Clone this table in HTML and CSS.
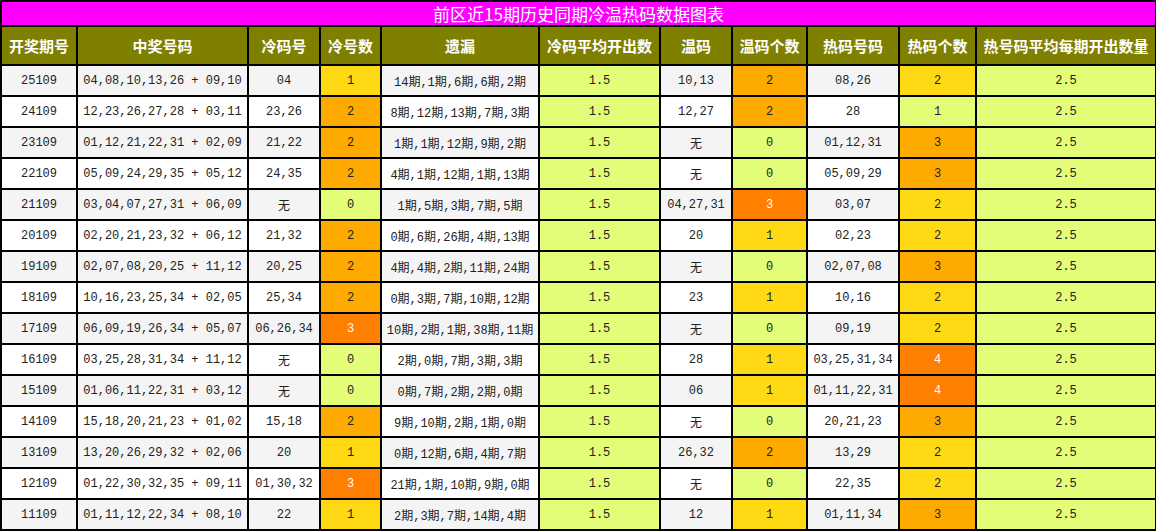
FILE: index.html
```html
<!DOCTYPE html>
<html lang="zh-CN">
<head>
<meta charset="utf-8">
<title>前区近15期历史同期冷温热码数据图表</title>
<link rel="stylesheet" href="styles.css">
</head>
<body>
<table class="chart">
  <colgroup>
    <col class="c1"><col class="c2"><col class="c3"><col class="c4"><col class="c5"><col class="c6"><col class="c7"><col class="c8"><col class="c9"><col class="c10"><col class="c11">
  </colgroup>
  <thead>
    <tr class="title-row"><th colspan="11">前区近15期历史同期冷温热码数据图表</th></tr>
    <tr class="head-row">
      <th>开奖期号</th><th>中奖号码</th><th>冷码号</th><th>冷号数</th><th>遗漏</th><th>冷码平均开出数</th><th>温码</th><th>温码个数</th><th>热码号码</th><th>热码个数</th><th>热号码平均每期开出数量</th>
    </tr>
  </thead>
  <tbody>
    <tr><td>25109</td><td>04,08,10,13,26 + 09,10</td><td>04</td><td class="l1">1</td><td>14期,1期,6期,6期,2期</td><td class="l0">1.5</td><td>10,13</td><td class="l2">2</td><td>08,26</td><td class="l1">2</td><td class="l0">2.5</td></tr>
    <tr><td>24109</td><td>12,23,26,27,28 + 03,11</td><td>23,26</td><td class="l2">2</td><td>8期,12期,13期,7期,3期</td><td class="l0">1.5</td><td>12,27</td><td class="l2">2</td><td>28</td><td class="l0">1</td><td class="l0">2.5</td></tr>
    <tr><td>23109</td><td>01,12,21,22,31 + 02,09</td><td>21,22</td><td class="l2">2</td><td>1期,1期,12期,9期,2期</td><td class="l0">1.5</td><td>无</td><td class="l0">0</td><td>01,12,31</td><td class="l2">3</td><td class="l0">2.5</td></tr>
    <tr><td>22109</td><td>05,09,24,29,35 + 05,12</td><td>24,35</td><td class="l2">2</td><td>4期,1期,12期,1期,13期</td><td class="l0">1.5</td><td>无</td><td class="l0">0</td><td>05,09,29</td><td class="l2">3</td><td class="l0">2.5</td></tr>
    <tr><td>21109</td><td>03,04,07,27,31 + 06,09</td><td>无</td><td class="l0">0</td><td>1期,5期,3期,7期,5期</td><td class="l0">1.5</td><td>04,27,31</td><td class="l3">3</td><td>03,07</td><td class="l1">2</td><td class="l0">2.5</td></tr>
    <tr><td>20109</td><td>02,20,21,23,32 + 06,12</td><td>21,32</td><td class="l2">2</td><td>0期,6期,26期,4期,13期</td><td class="l0">1.5</td><td>20</td><td class="l1">1</td><td>02,23</td><td class="l1">2</td><td class="l0">2.5</td></tr>
    <tr><td>19109</td><td>02,07,08,20,25 + 11,12</td><td>20,25</td><td class="l2">2</td><td>4期,4期,2期,11期,24期</td><td class="l0">1.5</td><td>无</td><td class="l0">0</td><td>02,07,08</td><td class="l2">3</td><td class="l0">2.5</td></tr>
    <tr><td>18109</td><td>10,16,23,25,34 + 02,05</td><td>25,34</td><td class="l2">2</td><td>0期,3期,7期,10期,12期</td><td class="l0">1.5</td><td>23</td><td class="l1">1</td><td>10,16</td><td class="l1">2</td><td class="l0">2.5</td></tr>
    <tr><td>17109</td><td>06,09,19,26,34 + 05,07</td><td>06,26,34</td><td class="l3">3</td><td>10期,2期,1期,38期,11期</td><td class="l0">1.5</td><td>无</td><td class="l0">0</td><td>09,19</td><td class="l1">2</td><td class="l0">2.5</td></tr>
    <tr><td>16109</td><td>03,25,28,31,34 + 11,12</td><td>无</td><td class="l0">0</td><td>2期,0期,7期,3期,3期</td><td class="l0">1.5</td><td>28</td><td class="l1">1</td><td>03,25,31,34</td><td class="l3">4</td><td class="l0">2.5</td></tr>
    <tr><td>15109</td><td>01,06,11,22,31 + 03,12</td><td>无</td><td class="l0">0</td><td>0期,7期,2期,2期,0期</td><td class="l0">1.5</td><td>06</td><td class="l1">1</td><td>01,11,22,31</td><td class="l3">4</td><td class="l0">2.5</td></tr>
    <tr><td>14109</td><td>15,18,20,21,23 + 01,02</td><td>15,18</td><td class="l2">2</td><td>9期,10期,2期,1期,0期</td><td class="l0">1.5</td><td>无</td><td class="l0">0</td><td>20,21,23</td><td class="l2">3</td><td class="l0">2.5</td></tr>
    <tr><td>13109</td><td>13,20,26,29,32 + 02,06</td><td>20</td><td class="l1">1</td><td>0期,12期,6期,4期,7期</td><td class="l0">1.5</td><td>26,32</td><td class="l2">2</td><td>13,29</td><td class="l1">2</td><td class="l0">2.5</td></tr>
    <tr><td>12109</td><td>01,22,30,32,35 + 09,11</td><td>01,30,32</td><td class="l3">3</td><td>21期,1期,10期,9期,0期</td><td class="l0">1.5</td><td>无</td><td class="l0">0</td><td>22,35</td><td class="l1">2</td><td class="l0">2.5</td></tr>
    <tr><td>11109</td><td>01,11,12,22,34 + 08,10</td><td>22</td><td class="l1">1</td><td>2期,3期,7期,14期,4期</td><td class="l0">1.5</td><td>12</td><td class="l1">1</td><td>01,11,34</td><td class="l2">3</td><td class="l0">2.5</td></tr>
  </tbody>
</table>
</body>
</html>
```
FILE: styles.css
```css
html, body {
  margin: 0;
  padding: 0;
  background: #ffffff;
}

.chart {
  border-collapse: collapse;
  table-layout: fixed;
  width: 1155px;
  font-family: "Liberation Mono", "Noto Sans CJK SC", monospace;
  font-size: 12px;
  color: #222222;
}

.c1 { width: 76px; }
.c2 { width: 171px; }
.c3 { width: 72px; }
.c4 { width: 61px; }
.c5 { width: 158px; }
.c6 { width: 121px; }
.c7 { width: 72px; }
.c8 { width: 75px; }
.c9 { width: 92px; }
.c10 { width: 77px; }
.c11 { width: 180px; }

.chart th,
.chart td {
  border: 2px solid #000000;
  padding: 0;
  text-align: center;
  vertical-align: middle;
  white-space: nowrap;
  overflow: hidden;
}

.title-row th {
  height: 23px;
  background: #ff00ff;
  color: #ffffff;
  font-family: "Noto Sans CJK SC", sans-serif;
  font-size: 17px;
  line-height: 23px;
  font-weight: normal;
}

.head-row th {
  height: 37px;
  background: #808000;
  color: #ffffff;
  font-family: "Noto Sans CJK SC", sans-serif;
  font-size: 15px;
  font-weight: bold;
}

.chart tbody tr { height: 31px; }

.chart tbody tr:nth-child(odd) td { background: #f4f4f4; }
.chart tbody tr:nth-child(even) td { background: #ffffff; }

.chart tbody tr td.l0 { background: #e3fd78; }
.chart tbody tr td.l1 { background: #ffd914; }
.chart tbody tr td.l2 { background: #ffaa00; }
.chart tbody tr td.l3 { background: #ff8000; color: #ffffff; }
```
